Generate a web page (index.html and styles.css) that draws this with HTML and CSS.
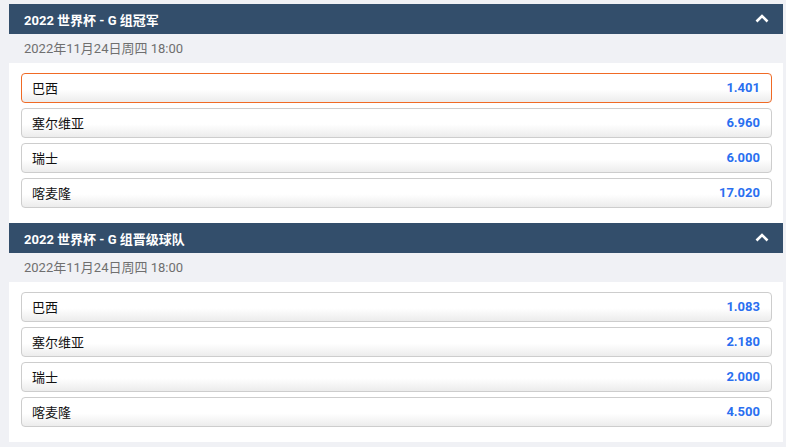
FILE: index.html
```html
<!DOCTYPE html>
<html lang="zh">
<head>
<meta charset="utf-8">
<link rel="stylesheet" href="styles.css">
</head>
<body>
<div class="page">
  <section class="panel">
    <div class="panel-head">
      <span class="title">2022 世界杯 - G 组冠军</span>
      <svg class="chev" width="14" height="9" viewBox="0 0 14 9"><path d="M1.5 7.5 L7 2 L12.5 7.5" fill="none" stroke="#fff" stroke-width="2.6" stroke-linejoin="miter"/></svg>
    </div>
    <div class="date">2022年11月24日周四 18:00</div>
    <div class="rows">
      <div class="row active"><span class="name">巴西</span><span class="odds">1.401</span></div>
      <div class="row"><span class="name">塞尔维亚</span><span class="odds">6.960</span></div>
      <div class="row"><span class="name">瑞士</span><span class="odds">6.000</span></div>
      <div class="row"><span class="name">喀麦隆</span><span class="odds">17.020</span></div>
    </div>
  </section>
  <section class="panel">
    <div class="panel-head">
      <span class="title">2022 世界杯 - G 组晋级球队</span>
      <svg class="chev" width="14" height="9" viewBox="0 0 14 9"><path d="M1.5 7.5 L7 2 L12.5 7.5" fill="none" stroke="#fff" stroke-width="2.6" stroke-linejoin="miter"/></svg>
    </div>
    <div class="date">2022年11月24日周四 18:00</div>
    <div class="rows">
      <div class="row"><span class="name">巴西</span><span class="odds">1.083</span></div>
      <div class="row"><span class="name">塞尔维亚</span><span class="odds">2.180</span></div>
      <div class="row"><span class="name">瑞士</span><span class="odds">2.000</span></div>
      <div class="row"><span class="name">喀麦隆</span><span class="odds">4.500</span></div>
    </div>
  </section>
</div>
</body>
</html>
```
FILE: styles.css
```css
* { box-sizing: border-box; }
html, body { margin: 0; padding: 0; }
body {
  background: #f0f1f5;
  font-family: Roboto, "Noto Sans CJK SC", sans-serif;
  font-size: 13px;
}
.page {
  padding: 4px 3px 0 9px;
}
.panel {
  background: #fff;
}
.panel-head {
  height: 30px;
  background: #334e6b;
  color: #fff;
  display: flex;
  align-items: center;
  justify-content: space-between;
  padding: 0 14px 0 15px;
}
.title {
  font-weight: bold;
  font-size: 13px;
}
.chev { display: block; margin-top: -1px; }
.date {
  height: 29px;
  background: #f0f1f5;
  color: #6f6f6f;
  display: flex;
  align-items: center;
  padding: 0 0 3px 15px;
  font-size: 13px;
}
.rows {
  padding: 10px 11px 10px 12px;
  display: flex;
  flex-direction: column;
  gap: 5px;
}
.row {
  height: 30px;
  border: 1px solid #cdcdcd;
  border-radius: 4px;
  background: linear-gradient(to bottom, #ffffff 0%, #ffffff 55%, #ececec 100%);
  display: flex;
  align-items: center;
  justify-content: space-between;
  padding: 0 11px 1px 10px;
}
.rows .row:last-child { margin-bottom: 5px; }
.row.active { border-color: #f06a25; }
.name { color: #111; }
.odds {
  color: #2a6ff0;
  font-weight: bold;
}
```
